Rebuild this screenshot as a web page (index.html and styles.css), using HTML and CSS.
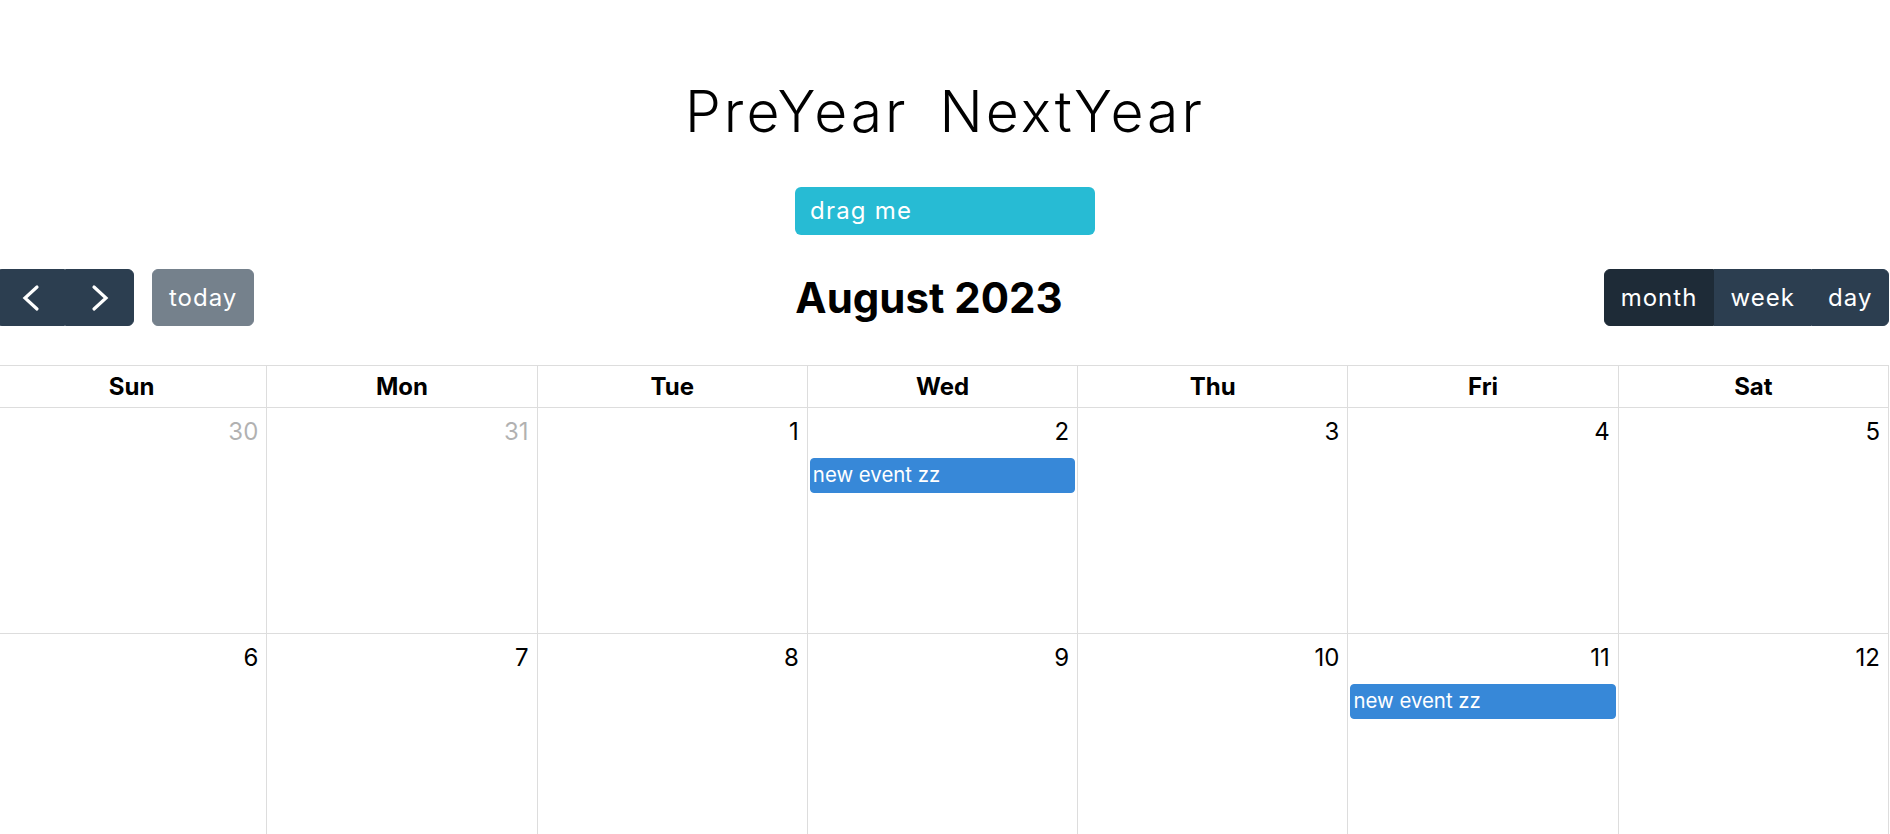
FILE: index.html
```html
<!DOCTYPE html>
<html lang="en">
<head>
<meta charset="utf-8">
<title>Calendar</title>
<link rel="stylesheet" href="styles.css">
</head>
<body>
<header class="top">
  <h1 class="year-nav"><a class="year-link">PreYear</a><a class="year-link">NextYear</a></h1>
  <div class="drag-item">drag me</div>
</header>

<div class="calendar">
  <div class="toolbar">
    <div class="chunk">
      <div class="btn-group">
        <button class="btn" aria-label="prev"><svg class="chev" viewBox="0 0 36 36"><polyline points="24,7 12,18 24,29"/></svg></button>
        <button class="btn" aria-label="next"><svg class="chev" viewBox="0 0 36 36"><polyline points="12,7 24,18 12,29"/></svg></button>
      </div>
      <button class="btn btn-today" disabled>today</button>
    </div>
    <h2 class="toolbar-title">August 2023</h2>
    <div class="chunk">
      <div class="btn-group">
        <button class="btn active">month</button>
        <button class="btn">week</button>
        <button class="btn">day</button>
      </div>
    </div>
  </div>

  <div class="grid">
    <div class="col-head">Sun</div>
    <div class="col-head">Mon</div>
    <div class="col-head">Tue</div>
    <div class="col-head">Wed</div>
    <div class="col-head">Thu</div>
    <div class="col-head">Fri</div>
    <div class="col-head">Sat</div>

    <div class="day other"><div class="num">30</div></div>
    <div class="day other"><div class="num">31</div></div>
    <div class="day"><div class="num">1</div></div>
    <div class="day"><div class="num">2</div><div class="event">new event zz</div></div>
    <div class="day"><div class="num">3</div></div>
    <div class="day"><div class="num">4</div></div>
    <div class="day"><div class="num">5</div></div>

    <div class="day"><div class="num">6</div></div>
    <div class="day"><div class="num">7</div></div>
    <div class="day"><div class="num">8</div></div>
    <div class="day"><div class="num">9</div></div>
    <div class="day"><div class="num">10</div></div>
    <div class="day"><div class="num">11</div><div class="event">new event zz</div></div>
    <div class="day"><div class="num">12</div></div>
  </div>
</div>
</body>
</html>
```

FILE: styles.css
```css
html {
  overflow-x: hidden;
}

body {
  margin: 0;
  font-family: Inter, "Noto Sans", sans-serif;
  font-size: 24px;
  color: #000;
  background: #fff;
}

.top {
  display: flex;
  flex-direction: column;
  align-items: center;
  padding-top: 78px;
}

.year-nav {
  margin: 0;
  font-size: 57px;
  font-weight: 300;
  line-height: 1.2;
  letter-spacing: 3px;
  display: flex;
  gap: 31px;
}

.year-link {
  color: #000;
  cursor: pointer;
}

.drag-item {
  margin-top: 41px;
  width: 300px;
  box-sizing: border-box;
  background: #27bbd4;
  color: #fff;
  border-radius: 6px;
  font-size: 24px;
  letter-spacing: 1.2px;
  line-height: 1.5;
  padding: 6px 15px;
}

.calendar {
  margin: 31px 1px 0 -4px;
}

.toolbar {
  display: flex;
  justify-content: space-between;
  align-items: center;
  margin-bottom: 36px;
}

.chunk {
  display: flex;
  align-items: center;
}

.toolbar-title {
  margin: 0;
  font-size: 42px;
  font-weight: 700;
  line-height: 1.5;
}

.btn-group {
  display: inline-flex;
}

.btn {
  font: inherit;
  font-size: 24px;
  line-height: 1.5;
  letter-spacing: 1px;
  color: #fff;
  background: #2c3e50;
  border: 1px solid #2c3e50;
  border-radius: 6px;
  padding: 0.4em 0.65em;
  cursor: pointer;
  display: inline-flex;
  align-items: center;
}

.btn-group .btn {
  border-radius: 0;
}

.btn-group .btn:first-child {
  border-radius: 6px 0 0 6px;
}

.btn-group .btn:last-child {
  border-radius: 0 6px 6px 0;
}

.btn.active {
  background: #1e2b37;
  border-color: #1e2b37;
}

.btn-today {
  margin-left: 18px;
  opacity: 0.65;
  cursor: default;
}

.chev {
  width: 36px;
  height: 36px;
  display: block;
}

.chev polyline {
  fill: none;
  stroke: #fff;
  stroke-width: 3.2;
  stroke-linecap: round;
  stroke-linejoin: miter;
}

.grid {
  display: grid;
  grid-template-columns: repeat(7, 1fr);
  border-top: 1px solid #ddd;
  border-left: 1px solid #ddd;
}

.col-head {
  border-right: 1px solid #ddd;
  border-bottom: 1px solid #ddd;
  text-align: center;
  font-weight: 700;
  line-height: 1.5;
  padding: 3px 4px 2px;
}

.day {
  border-right: 1px solid #ddd;
  border-bottom: 1px solid #ddd;
  height: 225px;
}

.num {
  text-align: right;
  line-height: 1.5;
  padding: 6px 8px 2px;
}

.day.other .num {
  opacity: 0.3;
}

.event {
  margin: 6px 2px 0 2px;
  background: #3788d8;
  border: 1px solid #3788d8;
  border-radius: 4px;
  color: #fff;
  font-size: 0.85em;
  line-height: 1.5;
  padding: 1px 2px;
  white-space: nowrap;
  overflow: hidden;
}
```
